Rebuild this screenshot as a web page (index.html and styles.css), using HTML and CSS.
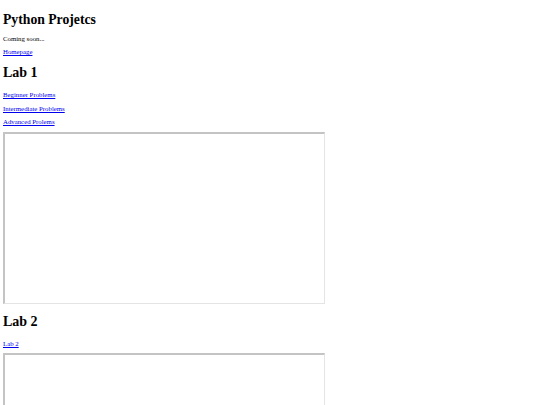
FILE: index.html
```html
<!DOCTYPE html>
<html lang="en">
<head>
  <meta charset="UTF-8" />
  <meta name="viewport" content="width=device-width, initial-scale=1.0"/>
  <title>Python Projetcs</title>
  <link rel="stylesheet" href="styles.css">
</head>
<body>

  <h1>Python Projetcs</h1>
  <p>Coming soon...</p>
  <p><a href="#">Homepage</a></p>

  <h2>Lab 1</h2>
  <p><a href="#">Beginner Problems</a></p>
  <p><a href="#">Intermediate Problems</a></p>
  <p><a href="#">Advanced Prolems</a></p>
  <iframe class="lab-frame" title="Lab 1"></iframe>

  <h2>Lab 2</h2>
  <p><a href="#">Lab 2</a></p>
  <iframe class="lab-frame" title="Lab 2"></iframe>

</body>
</html>
```

FILE: styles.css
```css
body {
  font-family: "Liberation Serif", "Times New Roman", serif;
  font-size: 6.8px;
  margin: 3px;
  background: #fff;
  color: #000;
}

h1 {
  font-size: 13.7px;
  margin: 8.7px 0 7px;
}

h2 {
  font-size: 14px;
  margin: 10px 0;
}

p {
  margin: 6.5px 0;
}

a {
  color: #0000ee;
}

.lab-frame {
  display: block;
  width: 319px;
  height: 169px;
  margin-top: 6.5px;
  border-style: solid;
  border-width: 2px 1px 1px 2px;
  border-color: #c4c4c4 #e4e4e4 #e4e4e4 #c4c4c4;
}
```
